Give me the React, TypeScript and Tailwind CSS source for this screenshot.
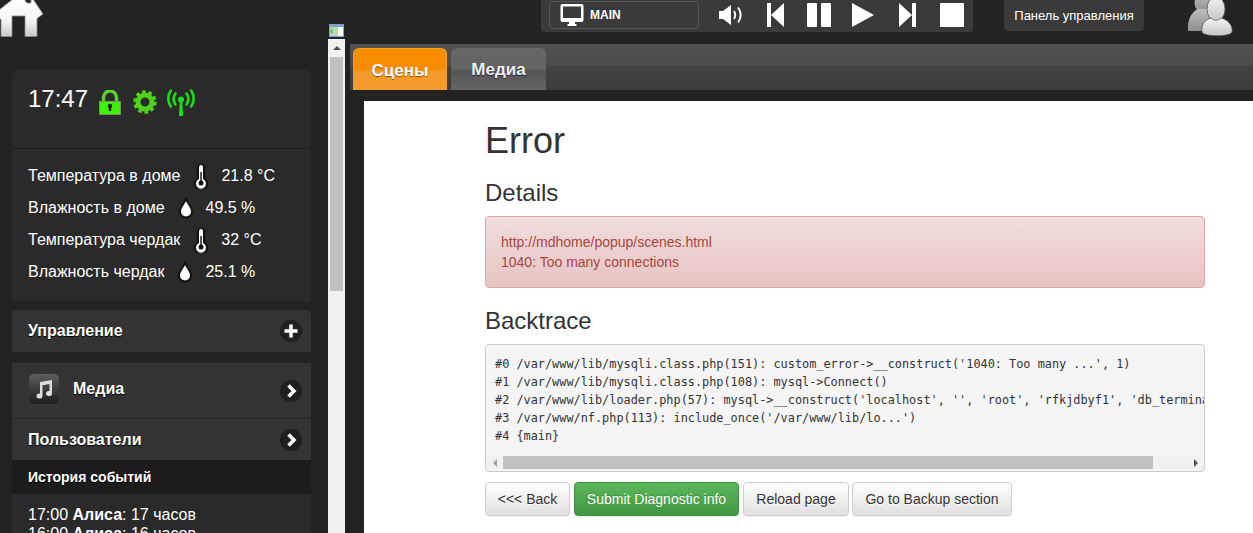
const sensors = [
  { label: 'Температура в доме', icon: 'temp', value: '21.8 °C' },
  { label: 'Влажность в доме', icon: 'drop', value: '49.5 %' },
  { label: 'Температура чердак', icon: 'temp', value: '32 °C' },
  { label: 'Влажность чердак', icon: 'drop', value: '25.1 %' },
];

const traceLines = [
  "#0 /var/www/lib/mysqli.class.php(151): custom_error->__construct('1040: Too many ...', 1)",
  '#1 /var/www/lib/mysqli.class.php(108): mysql->Connect()',
  "#2 /var/www/lib/loader.php(57): mysql->__construct('localhost', '', 'root', 'rfkjdbyf1', 'db_terminal')",
  "#3 /var/www/nf.php(113): include_once('/var/www/lib/lo...')",
  '#4 {main}',
];

const HomeIcon = () => (
  <svg width="44" height="37" viewBox="0 0 44 37">
    <defs>
      <linearGradient id="home" x1="0" y1="0" x2="0" y2="1">
        <stop offset="0" stopColor="#ffffff" />
        <stop offset="0.6" stopColor="#f4f4f4" />
        <stop offset="1" stopColor="#c8c8c8" />
      </linearGradient>
    </defs>
    <path
      d="M13 -1L24 -1L27 3L31 3L31 -1L33 -1L43 14L37 18.500L37 36.500L25 36.500L25 16L12 16L12 36.500L1 36.500L1 19L-1 20L-1 10Z"
      fill="url(#home)"
      stroke="#8a8a8a"
      strokeWidth="0.8"
    />
  </svg>
);

const UsersIcon = () => (
  <svg width="46" height="37" viewBox="0 0 46 37">
    <defs>
      <linearGradient id="userBack" x1="0" y1="0" x2="0" y2="1">
        <stop offset="0" stopColor="#bdbdbb" />
        <stop offset="1" stopColor="#8f8f8d" />
      </linearGradient>
      <linearGradient id="userFront" x1="0" y1="0" x2="0" y2="1">
        <stop offset="0" stopColor="#f4f4f2" />
        <stop offset="1" stopColor="#c6c6c4" />
      </linearGradient>
    </defs>
    <ellipse cx="15" cy="3" rx="8.500" ry="10" fill="url(#userBack)" />
    <path d="M0 31C-1 21 3 12 10 9L22 9C26 12 28 20 24 31Z" fill="url(#userBack)" />
    <ellipse cx="28" cy="9" rx="9" ry="12.500" fill="url(#userFront)" stroke="#5a5a5a" strokeWidth="0.800" />
    <path d="M14 32C13 25 16 20 23 18C26 21 30 21 33 18C40 20 45 25 44 32C42 37 16 37 14 32Z" fill="url(#userFront)" stroke="#5a5a5a" strokeWidth="0.800" />
  </svg>
);

const MonitorIcon = () => (
  <svg width="24" height="22" viewBox="0 0 24 22" fill="#fff">
    <path d="M0.500 2a2 2 0 0 1 2-2h19a2 2 0 0 1 2 2v14a2 2 0 0 1-2 2h-19a2 2 0 0 1-2-2zM3 2.500v11.500h18V2.500z" fillRule="evenodd" />
    <path d="M9 18h6v2h1.500v2H7.500v-2H9z" />
  </svg>
);

const Thermometer = () => (
  <svg width="16" height="25" viewBox="0 0 16 25">
    <path d="M5 3a3 3 0 0 1 6 0v11.500a6 6 0 1 1-6 0z" fill="#fff" stroke="#111" strokeWidth="2" />
    <circle cx="8" cy="19" r="2.500" fill="#111" />
    <rect x="7.300" y="8" width="1.400" height="10" fill="#111" />
  </svg>
);

const Drop = () => (
  <svg width="16" height="22" viewBox="0 0 16 22">
    <path d="M8 2C10 7 14 10 14 14.500a6 6 0 0 1-12 0C2 10 6 7 8 2z" fill="#fff" stroke="#111" strokeWidth="2" />
  </svg>
);

const LockIcon = () => (
  <svg width="22" height="25" viewBox="0 0 22 25">
    <path d="M4.500 12V7.500a6.500 6.500 0 0 1 13 0V12" fill="none" stroke="#7a9a70" strokeWidth="3.600" />
    <path d="M4.500 12V7.500a6.500 6.500 0 0 1 13 0V12" fill="none" stroke="#40f000" strokeWidth="2" />
    <rect x="0.500" y="11.500" width="21" height="13" fill="#40f000" stroke="#6a9a5a" />
    <circle cx="11" cy="16" r="2.200" fill="#222" />
    <rect x="9.800" y="16" width="2.400" height="5" fill="#222" />
  </svg>
);

const GearIcon = () => (
  <svg width="24" height="24" viewBox="0 0 24 24">
    <circle cx="12" cy="12" r="7" fill="none" stroke="#4ed21a" strokeWidth="5" />
    <circle cx="12" cy="12" r="10" fill="none" stroke="#4ed21a" strokeWidth="3.500" strokeDasharray="3.500 2.780" />
  </svg>
);

const AntennaIcon = () => (
  <svg width="28" height="27" viewBox="0 0 28 27" fill="none" stroke="#18e018" strokeWidth="2.600" strokeLinecap="round">
    <path d="M12.500 27L13.300 12L14.700 12L15.500 27Z" fill="#18e018" stroke="#18e018" strokeWidth="1" strokeLinecap="butt" />
    <circle cx="14" cy="10.500" r="3" fill="#18e018" stroke="none" />
    <path d="M8.500 4.500C6 8 6 12 8.500 15.500M19.500 4.500C22 8 22 12 19.500 15.500" />
    <path d="M3.800 1.500C0.500 6 0.500 13 3.800 17.500M24.200 1.500C27.500 6 27.500 13 24.200 17.500" />
  </svg>
);

const RoundButton = ({ kind }: { kind: 'plus' | 'chevron' }) => (
  <div className="w-[22px] h-[22px] rounded-full bg-[#1f1f1f] flex items-center justify-center shrink-0">
    <svg width="14" height="14" viewBox="0 0 14 14" fill="none" stroke="#fff" strokeWidth="3.500">
      {kind === 'plus' ? <path d="M7 0.500V13.500M0.500 7H13.500" /> : <path d="M4.500 1.500L10 7L4.500 12.500" />}
    </svg>
  </div>
);

const NoteTile = () => (
  <div className="w-[30px] h-[30px] rounded-[5px] bg-gradient-to-b from-[#5e5e5e] to-[#1e1e1e] flex items-center justify-center shrink-0">
    <svg width="18" height="20" viewBox="0 0 18 20" fill="#ddd">
      <path d="M5 3L17 1V14.500a3 2.500 0 1 1-2.500-2.400V5L7.500 6.200V17a3 2.500 0 1 1-2.500-2.400z" />
    </svg>
  </div>
);

const boldTitle = "font-bold text-white [text-shadow:0_1px_1px_#000]";

const Sidebar = () => (
  <div className="w-[328px] shrink-0 pl-3 pr-[17px] pt-[31px] overflow-hidden text-white">
    <div className="h-[232px] rounded-t-[5px] bg-[#2a2a2a] border-x border-[#272727]">
      <div className="h-[79px] border-b border-[#1c1c1c] pl-[15px] pt-[15px] flex items-start">
        <span className="text-[24px] leading-[28px] w-[59px]">17:47</span>
        <div className="ml-3 mt-[5px]">
          <LockIcon />
        </div>
        <div className="ml-3 mt-[5px]">
          <GearIcon />
        </div>
        <div className="ml-[10px] mt-1">
          <AntennaIcon />
        </div>
      </div>
      <div className="pt-[11px] pl-[15px]">
        {sensors.map((s) => (
          <div key={s.label} className="h-[32px] flex items-center text-[16px]">
            <span>{s.label}</span>
            <span className="ml-[13px] mr-3 flex">{s.icon === 'temp' ? <Thermometer /> : <Drop />}</span>
            <span>{s.value}</span>
          </div>
        ))}
      </div>
    </div>

    <div className="mt-2 h-[42px] rounded-t-[4px] bg-[#333333] pl-4 pr-[9px] flex items-center justify-between">
      <span className={`${boldTitle} text-[16px]`}>Управление</span>
      <RoundButton kind="plus" />
    </div>

    <div className="mt-[10px] bg-[#333333]">
      <div className="h-[57px] border-y border-[#252525] pl-[17px] pr-[9px] pb-[3px] flex items-center">
        <NoteTile />
        <span className={`${boldTitle} text-[16px] ml-[14px] flex-1`}>Медиа</span>
        <div className="mt-[3px]">
          <RoundButton kind="chevron" />
        </div>
      </div>
      <div className="h-[41px] pl-4 pr-[9px] flex items-center justify-between">
        <span className={`${boldTitle} text-[16px]`}>Пользователи</span>
        <RoundButton kind="chevron" />
      </div>
    </div>
    <div className="h-[34px] bg-[#1c1c1c] pl-4 flex items-center">
      <span className={`${boldTitle} text-[14px]`}>История событий</span>
    </div>
    <div className="bg-[#2a2a2a] pl-4 pt-[11px] text-[16px] leading-[19px]">
      <div>
        17:00 <b>Алиса</b>: 17 часов
      </div>
      <div>
        16:00 <b>Алиса</b>: 16 часов
      </div>
    </div>
  </div>
);

const SideScrollbar = () => (
  <div className="w-[17px] shrink-0 bg-[#f1f1f1] flex flex-col items-center relative">
    <div className="absolute -top-[15px] left-[1px] w-[15px] h-[13px] bg-white border border-[#7f9fd0] border-t-[3px] flex">
      <div className="w-[8px] h-full bg-[#b6d9b0] text-[#2f9a2f] text-[9px] leading-[9px] font-bold font-['Liberation_Sans',sans-serif]">‹</div>
    </div>
    <div className="h-[18px] flex items-center justify-center">
      <div className="w-0 h-0 border-x-[4px] border-x-transparent border-b-[4px] border-b-[#505050]" />
    </div>
    <div className="w-[13px] h-[234px] bg-[#c1c1c1]" />
  </div>
);

const defaultButton =
  'h-[34px] rounded-[4px] border border-[#cccccc] bg-gradient-to-b from-white to-[#e0e0e0] [text-shadow:0_1px_0_#fff] shadow-[0_1px_1px_rgba(0,0,0,0.075)]';

const Main = () => (
  <div className="flex-1 min-w-0 overflow-hidden">
    <div className="ml-[5px] mt-[5px] h-[46px] pl-[3px] pt-1 flex gap-1 items-stretch bg-[linear-gradient(#525252_0%,#4c4c4c_45%,#414141_50%,#3c3c3c_100%)]">
      <div className="w-[94px] pt-[2px] rounded-t-[6px] border border-b-0 border-[#f7a21c] bg-[linear-gradient(#f98c00_0%,#f88c00_50%,#f59a2c_55%,#f59a2c_100%)] flex items-center justify-center text-[17px] font-bold text-white [text-shadow:0_1px_1px_#8a5000]">
        Сцены
      </div>
      <div className="w-[95px] pt-[2px] rounded-t-[6px] bg-[linear-gradient(#666666_0%,#636363_50%,#555555_55%,#666666_100%)] flex items-center justify-center text-[17px] font-bold text-[#eef2fa] [text-shadow:0_1px_1px_#222]">
        Медиа
      </div>
    </div>
    <div className="ml-[19px] mt-[11px] h-[432px] bg-white pl-[121px] pr-[48px] pt-5 text-[#333333]">
      <h1 className="text-[36px] leading-[39.600px]">Error</h1>
      <h3 className="mt-[19px] text-[24px] leading-[26.400px]">Details</h3>
      <div className="mt-[10px] h-[72px] rounded-[4px] border border-[#dca7a7] bg-gradient-to-b from-[#f2dede] to-[#e7c3c3] px-[15px] py-[15px] text-[14px] leading-5 text-[#a94442]">
        <div>http://mdhome/popup/scenes.html</div>
        <div>1040: Too many connections</div>
      </div>
      <h3 className="mt-5 text-[24px] leading-[26.400px]">Backtrace</h3>
      <div className="mt-[10px] h-[128px] rounded-[4px] border border-[#cccccc] bg-[#f5f5f5] overflow-hidden flex flex-col">
        <pre className="flex-1 overflow-hidden pl-[9px] pt-[10px] text-[11.870px] leading-[18px] text-[#333333] font-['DejaVu_Sans_Mono',monospace]">
          {traceLines.join('\n')}
        </pre>
        <div className="h-[13px] mb-[2px] mx-[1px] flex items-center bg-[#f1f1f1]">
          <div className="w-[16px] flex justify-center">
            <div className="w-0 h-0 border-y-[4px] border-y-transparent border-r-[4px] border-r-[#a0a0a0]" />
          </div>
          <div className="w-[650px] h-full bg-[#c1c1c1]" />
          <div className="flex-1 flex justify-end pr-[5px]">
            <div className="w-0 h-0 border-y-[4px] border-y-transparent border-l-[4px] border-l-[#505050]" />
          </div>
        </div>
      </div>
      <div className="mt-[10px] flex gap-1 text-[14px]">
        <button className={`${defaultButton} w-[85px]`}>{'<<< Back'}</button>
        <button className="w-[165px] h-[34px] rounded-[4px] border border-[#3e8f3e] bg-gradient-to-b from-[#5cb85c] to-[#419641] text-white [text-shadow:0_-1px_0_rgba(0,0,0,0.2)] shadow-[0_1px_1px_rgba(0,0,0,0.075)]">
          Submit Diagnostic info
        </button>
        <button className={`${defaultButton} w-[106px]`}>Reload page</button>
        <button className={`${defaultButton} w-[160px] -ml-px`}>Go to Backup section</button>
      </div>
    </div>
  </div>
);

export default function App() {
  return (
    <div className="w-full h-[533px] overflow-hidden bg-[#222222] flex flex-col font-['Liberation_Sans',Arial,sans-serif]">
      {/* ヘッダー */}
      <div className="h-[39px] shrink-0 bg-[#232323] flex items-start">
        <HomeIcon />
        <div className="ml-[497px] w-[432px] h-[32px] rounded-b-[4px] bg-[#3a3a3a] flex items-start pl-2">
          <div className="mt-[1px] w-[150px] h-[28px] rounded-[4px] border border-[#575757] flex items-center pl-[10px] gap-[6px]">
            <MonitorIcon />
            <span className="text-[12px] font-bold text-white">MAIN</span>
          </div>
          <div className="ml-[20px] mt-[3px] flex items-center h-[24px]">
            <svg width="25" height="22" viewBox="0 0 25 22" fill="none" stroke="#fff" strokeWidth="2">
              <path d="M0 7H4L12 1V21L4 15H0Z" fill="#fff" stroke="none" />
              <path d="M15 7C16.500 9.500 16.500 12.500 15 15M19 3.500C22.500 8 22.500 14 19 18.500" />
            </svg>
            <svg width="17" height="24" viewBox="0 0 17 24" fill="#fff" className="ml-[23px]">
              <path d="M0 0H4V24H0ZM17 0V24L4 12Z" />
            </svg>
            <svg width="24" height="24" viewBox="0 0 24 24" fill="#fff" className="ml-[23px]">
              <rect width="10" height="24" rx="1" />
              <rect x="14" width="10" height="24" rx="1" />
            </svg>
            <svg width="22" height="24" viewBox="0 0 22 24" fill="#fff" className="ml-[21px]">
              <path d="M0 0L22 12L0 24Z" />
            </svg>
            <svg width="17" height="24" viewBox="0 0 17 24" fill="#fff" className="ml-[25px]">
              <path d="M0 0L13 12L0 24ZM13 0H17V24H13Z" />
            </svg>
            <svg width="24" height="24" viewBox="0 0 24 24" fill="#fff" className="ml-[24px]">
              <rect width="24" height="24" rx="1" />
            </svg>
          </div>
        </div>
        <div className="ml-[31px] w-[140px] h-[31px] rounded-b-[4px] bg-[#3a3a3a] flex items-center justify-center text-[13px] text-white">
          Панель управления
        </div>
        <div className="ml-[44px]">
          <UsersIcon />
        </div>
      </div>

      <div className="flex-1 min-h-0 flex">
        <Sidebar />
        <SideScrollbar />
        <Main />
      </div>
    </div>
  );
}
